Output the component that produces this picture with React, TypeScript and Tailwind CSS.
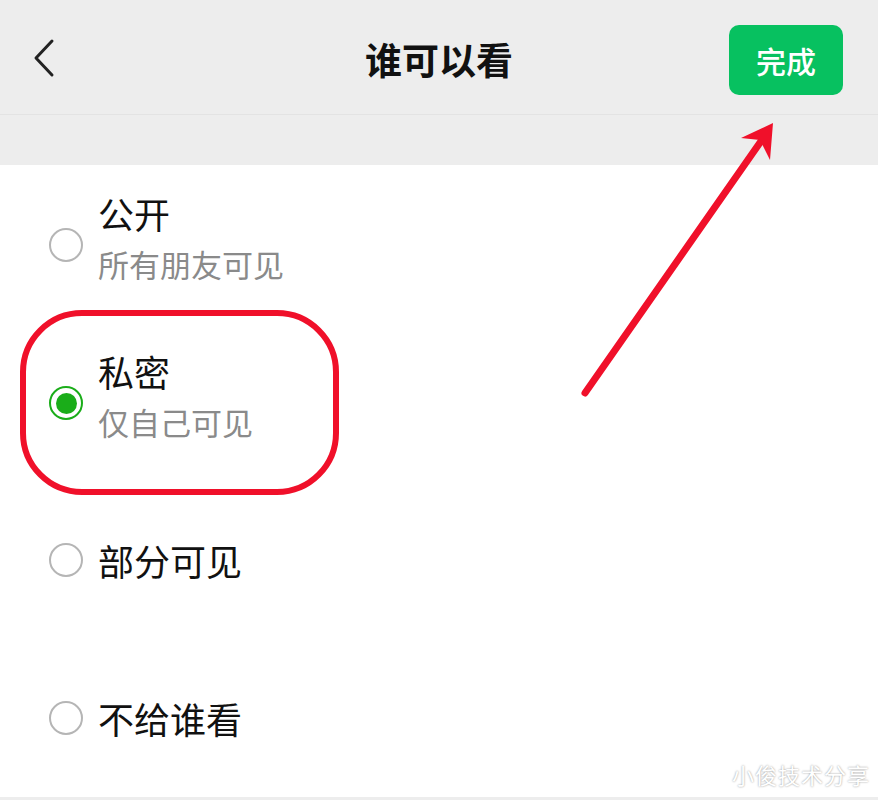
import React from 'react';

const font = { fontFamily: '"Noto Sans CJK SC", "Noto Sans", sans-serif' };

function Radio({ checked }: { checked?: boolean }) {
  if (checked) {
    return (
      <div className="w-[34px] h-[34px] rounded-full border-[2.5px] border-[#1aad19] flex items-center justify-center shrink-0">
        <div className="w-[21px] h-[21px] rounded-full bg-[#1aad19]" />
      </div>
    );
  }
  return <div className="w-[34px] h-[34px] rounded-full border-[2.5px] border-[#b5b5b5] shrink-0" />;
}

const options = [
  { title: '公开', sub: '所有朋友可见', h: 'h-[144px]' },
  { title: '私密', sub: '仅自己可见', h: 'h-[172px]', checked: true },
  { title: '部分可见', h: 'h-[158px]' },
  { title: '不给谁看', h: 'h-[158px]' },
];

export default function App() {
  return (
    <div className="relative w-[878px] h-[800px] bg-white overflow-hidden" style={font}>
      <div className="h-[114px] bg-[#ededed] flex items-center justify-between pl-[30px] pr-[35px]">
        <svg width="28" height="40" viewBox="0 0 28 40" className="mt-[2px]">
          <path d="M22 3 L6 20 L22 37" fill="none" stroke="#222" strokeWidth="3" strokeLinecap="round" strokeLinejoin="round" />
        </svg>
        <div className="absolute left-0 right-0 top-[29px] text-center text-[37px] leading-[60px] font-bold text-[#111] pointer-events-none">
          谁可以看
        </div>
        <button className="w-[114px] h-[70px] mt-[6px] rounded-[10px] bg-[#07c160] text-white text-[30px] font-medium">
          完成
        </button>
      </div>
      <div className="h-[51px] bg-[#ededed] border-t border-[#e3e3e3]" />
      <div className="flex flex-col">
        {options.map((o) => (
          <div key={o.title} className={`${o.h} flex items-center pl-[49px] gap-[15px]`}>
            <div className={o.sub ? 'mt-[16px]' : ''}>
              <Radio checked={o.checked} />
            </div>
            <div className="flex flex-col gap-[12px]">
              <div className="text-[36px] leading-[42px] text-[#111]">{o.title}</div>
              {o.sub && <div className="text-[31px] leading-[36px] text-[#8a8a8a]">{o.sub}</div>}
            </div>
          </div>
        ))}
      </div>
      <div className="h-[3px] bg-[#ededed]" />

      {/* annotations */}
      <div className="absolute left-[20px] top-[310px] w-[319px] h-[185px] rounded-[62px] border-[6px] border-[#f0102a]" />
      <svg className="absolute left-0 top-0 pointer-events-none" width="878" height="800">
        <line x1="585" y1="393" x2="766" y2="134" stroke="#f0102a" strokeWidth="7" strokeLinecap="round" />
        <polygon points="773,123 770,160 760,140 741,138" fill="#f0102a" />
      </svg>
      <div
        className="absolute right-[8px] top-[760px] text-[22px] leading-[28px] text-white tracking-[1px]"
        style={{ textShadow: '0 0 2px rgba(0,0,0,0.45)' }}
      >
        小俊技术分享
      </div>
    </div>
  );
}
